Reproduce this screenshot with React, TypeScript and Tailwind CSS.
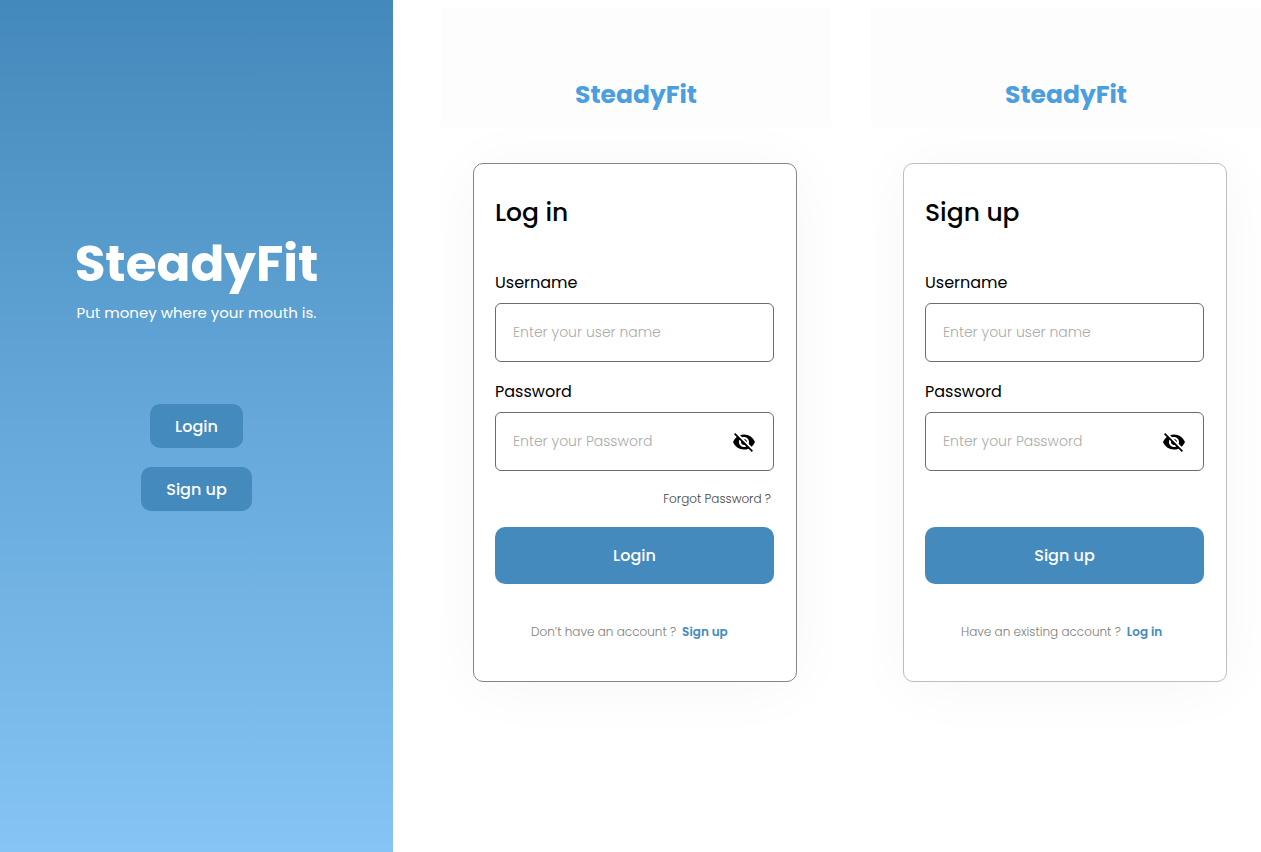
import { useId, useState } from "react";
import { MdVisibility, MdVisibilityOff } from "react-icons/md";

function Welcome() {
  return (
    <section className="flex flex-col items-center bg-linear-to-b from-[#4489bb] via-[#65a8d9] to-[#85c4f4] px-4 pt-[232px] pb-16 text-white">
      <h1 className="text-[50px] leading-16 font-bold">SteadyFit</h1>
      <p className="mt-[5px] text-[15px] leading-6">Put money where your mouth is.</p>
      <nav className="mt-[79px] flex flex-col items-center gap-[19px]">
        <button type="button" className="h-11 rounded-[10px] bg-[#448abd] px-[25px] pt-px text-base font-medium">
          Login
        </button>
        <button type="button" className="h-11 rounded-[10px] bg-[#448abd] px-[25px] pt-px text-base font-medium">
          Sign up
        </button>
      </nav>
    </section>
  );
}

function UsernameField() {
  const id = useId();
  return (
    <div>
      <label htmlFor={id} className="block text-base leading-6">
        Username
      </label>
      <input
        id={id}
        type="text"
        placeholder="Enter your user name"
        className="mt-2 block h-[59px] w-full rounded-md border border-[#6b6b6b] px-[17px] text-sm font-light placeholder:text-[#ababab]"
      />
    </div>
  );
}

function PasswordField() {
  const id = useId();
  const [visible, setVisible] = useState(false);
  return (
    <div>
      <label htmlFor={id} className="block text-base leading-6">
        Password
      </label>
      <div className="mt-2 flex h-[59px] items-center rounded-md border border-[#6b6b6b] pr-[17px]">
        <input
          id={id}
          type={visible ? "text" : "password"}
          placeholder="Enter your Password"
          className="h-full min-w-0 flex-1 px-[17px] text-sm font-light placeholder:text-[#ababab]"
        />
        <button
          type="button"
          aria-label={visible ? "Hide password" : "Show password"}
          onClick={() => setVisible(!visible)}
        >
          {visible ? <MdVisibility size={24} /> : <MdVisibilityOff size={24} />}
        </button>
      </div>
    </div>
  );
}

type AuthPanelProps = {
  title: string;
  action: string;
  prompt: string;
  link: string;
  border: string;
  forgot?: boolean;
};

function AuthPanel({ title, action, prompt, link, border, forgot }: AuthPanelProps) {
  return (
    <section className="flex flex-col overflow-hidden pt-2">
      <header className="relative z-10 flex h-[119px] items-end justify-center bg-[#fdfdfd] pb-[14px]">
        <p className="text-[25px] leading-9 font-bold text-[#4b9fde]">SteadyFit</p>
      </header>
      <form
        onSubmit={(event) => event.preventDefault()}
        className={`mt-9 mr-[34px] ml-8 rounded-[10px] border bg-white pt-[31px] pr-[22px] pb-[37px] pl-[21px] shadow-[0_4px_64px_rgba(0,0,0,0.04)] ${border}`}
      >
        <h2 className="text-[25px] leading-9 font-medium">{title}</h2>
        <div className="mt-10 flex flex-col gap-[18px]">
          <UsernameField />
          <PasswordField />
        </div>
        <div className="flex h-14 items-center justify-end pr-[3px] text-xs font-light text-[#444444]">
          {forgot && <a href="#forgot">Forgot Password ?</a>}
        </div>
        <button type="submit" className="h-[57px] w-full rounded-[10px] bg-[#448abd] text-base font-medium text-white">
          {action}
        </button>
        <p className="mt-9 flex gap-[6px] pl-9 text-xs leading-6 font-light whitespace-nowrap text-[#7d7d7d]">
          {prompt}
          <a href="#switch" className="font-semibold text-[#448abd]">
            {link}
          </a>
        </p>
      </form>
    </section>
  );
}

export default function App() {
  return (
    <main className="grid min-h-screen grid-cols-[393fr_868fr] bg-white font-[Poppins,Inter,sans-serif] text-black">
      <Welcome />
      <div className="grid grid-cols-2 gap-10 pl-12">
        <AuthPanel
          title="Log in"
          action="Login"
          prompt="Don’t have an account ?"
          link="Sign up"
          border="border-[#858585]"
          forgot
        />
        <AuthPanel
          title="Sign up"
          action="Sign up"
          prompt="Have an existing account ?"
          link="Log in"
          border="border-[#bdbdbd]"
        />
      </div>
    </main>
  );
}
